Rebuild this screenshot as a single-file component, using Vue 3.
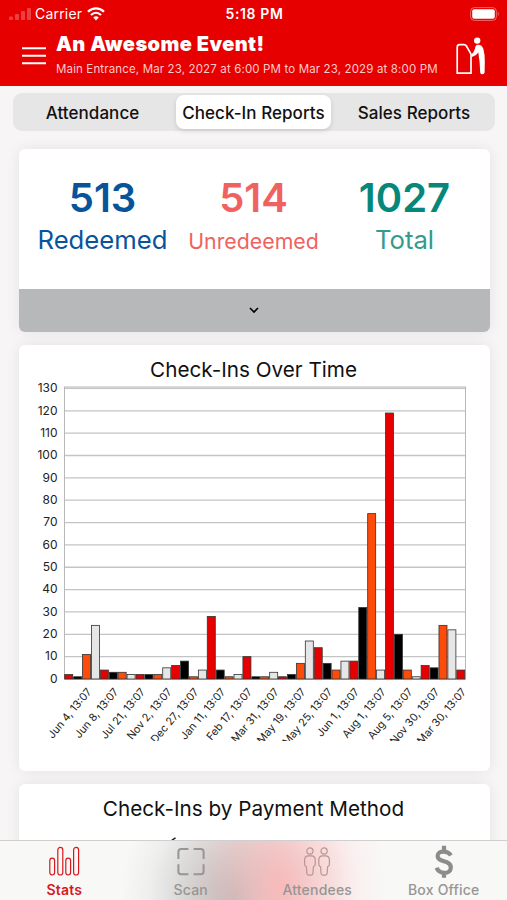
<script setup>
import { ref } from 'vue';

const segments = ['Attendance', 'Check-In Reports', 'Sales Reports'];
const activeSegment = ref(1);
const activeTab = ref('Stats');

const totals = [
    { value: 513, label: 'Redeemed', name: 'redeemed' },
    { value: 514, label: 'Unredeemed', name: 'unredeemed' },
    { value: 1027, label: 'Total', name: 'total' },
];

const tabs = ['Stats', 'Scan', 'Attendees', 'Box Office'];

// Check-ins chart
const values = [
    2, 1, 11, 24, 4, 3, 3, 2, 2, 2, 2, 5, 6, 8, 1,
    4, 28, 4, 1, 2, 10, 1, 1, 3, 1, 2, 7, 17, 14, 7,
    4, 8, 8, 32, 74, 4, 119, 20, 4, 1, 6, 5, 24, 22, 4,
];
const dates = [
    'Jun 4', 'Jun 8', 'Jul 21', 'Nov 2', 'Dec 27', 'Jan 11', 'Feb 17', 'Mar 31',
    'May 19', 'May 25', 'Jun 1', 'Aug 1', 'Aug 5', 'Nov 30', 'Mar 30',
];
const colors = ['#e60000', '#000000', '#ff4b0a', '#e6e6e6'];

const left = 45.5;
const right = 446.5;
const base = 294;
const unit = 2.235;
const step = (right - left) / values.length;

const ticks = Array.from({ length: 14 }, (_, i) => ({ label: i * 10, y: base - i * 10 * unit }));
const bars = values.map((v, i) => ({
    x: left + i * step + 0.2,
    y: base - v * unit,
    height: v * unit,
    fill: colors[i % 4],
}));
const labels = dates.map((d, i) => ({ text: `${d}, 13:07`, x: left + i * step * 3 + 27.8, y: 307 }));
</script>

<template>
    <div class="screen">
        <header class="header">
            <div class="status-bar">
                <div class="status-left">
                    <svg class="signal" width="22" height="14" viewBox="0 0 22 14">
                        <rect x="0" y="9.5" width="4" height="3.5" rx="1" />
                        <rect x="6" y="7" width="4" height="6" rx="1" />
                        <rect x="12" y="4" width="4" height="9" rx="1" />
                        <rect x="18" y="1" width="4" height="12" rx="1" />
                    </svg>
                    <span class="carrier">Carrier</span>
                    <svg class="wifi" width="18" height="14" viewBox="0 0 18 14">
                        <path d="M1 4.8 C5.6 .3 12.4 .3 17 4.8" />
                        <path d="M4 8 C7 5.1 11 5.1 14 8" />
                        <path class="wifi-dot" d="M6.2 10.4 Q9 7.9 11.8 10.4 L9 13.4 Z" />
                    </svg>
                </div>
                <span class="clock">5:18 PM</span>
                <svg class="battery" width="30" height="14" viewBox="0 0 30 14">
                    <rect class="battery-case" x=".6" y=".6" width="25.8" height="12.8" rx="3.8" />
                    <rect class="battery-level" x="2.2" y="2.2" width="22.6" height="9.6" rx="2" />
                    <path class="battery-tip" d="M27.8 4.6 Q30 7 27.8 9.4 Z" />
                </svg>
            </div>
            <div class="event-bar">
                <svg class="menu" width="26" height="20" viewBox="0 0 26 20">
                    <path d="M1 2.2 H25 M1 9.7 H25 M1 17.2 H25" />
                </svg>
                <div class="event">
                    <h1>An Awesome Event!</h1>
                    <p>Main Entrance, Mar 23, 2027 at 6:00 PM to Mar 23, 2029 at 8:00 PM</p>
                </div>
                <svg class="gate" width="30" height="38" viewBox="0 0 30 38">
                    <path class="gate-box" d="M3.6 7.6 H8 Q9.6 7.6 10.4 9 L15 17.2 V36.2 H1.2 V10.2 Q1.2 7.6 3.6 7.6 Z" />
                    <circle cx="21.2" cy="3.6" r="3.2" />
                    <path d="M21.4 7.8 Q26 7.4 27.4 12 Q29 18 28.8 24 L28.6 35.5 Q28.4 37.3 26.4 37.3 Q24.4 37.3 24.2 35.4 L23.6 25 Q22.8 20.4 22.4 15.6 Q20.4 18.8 16 20 L15.4 17.4 Q18 15.4 19 11.4 Q19.6 8 21.4 7.8 Z" />
                </svg>
            </div>
        </header>

        <main class="content">
            <div class="segmented">
                <button v-for="(s, i) in segments" :key="s" :class="{ active: i === activeSegment }" @click="activeSegment = i">
                    {{ s }}
                </button>
            </div>

            <section class="card summary">
                <div class="totals">
                    <div v-for="t in totals" :key="t.name" class="total-item" :class="t.name">
                        <strong>{{ t.value }}</strong>
                        <span>{{ t.label }}</span>
                    </div>
                </div>
                <div class="expand">
                    <svg width="10" height="7" viewBox="0 0 10 7"><path d="M1 1 L5 5 L9 1" /></svg>
                </div>
            </section>

            <section class="card chart-card">
                <h2>Check-Ins Over Time</h2>
                <svg class="chart" width="471" height="362" viewBox="0 -6 471 362">
                    <line v-for="t in ticks" :key="t.label" class="grid" :x1="left" :x2="right" :y1="t.y" :y2="t.y" />
                    <rect class="frame" :x="left" y="2" :width="right - left" height="292" />
                    <rect v-for="(b, i) in bars" :key="i" class="bar" :x="b.x" :y="b.y" :width="step - 0.9" :height="b.height" :fill="b.fill" />
                    <text v-for="t in ticks" :key="t.label" class="tick" x="38.5" :y="t.y + 3.8">{{ t.label }}</text>
                    <text v-for="l in labels" :key="l.text" class="date" :x="l.x" :y="l.y" :transform="`rotate(-50 ${l.x} ${l.y})`">{{ l.text }}</text>
                </svg>
            </section>

            <section class="card payment-card">
                <h2>Check-Ins by Payment Method</h2>
                <svg class="pie-line" width="6" height="4" viewBox="0 0 6 4"><path d="M.5 3.5 L4.5 .8" /></svg>
            </section>
        </main>

        <nav class="tab-bar">
            <a v-for="tab in tabs" :key="tab" class="tab" :class="{ active: tab === activeTab }" @click="activeTab = tab">
                <svg v-if="tab === 'Stats'" width="32" height="34" viewBox="0 0 32 34">
                    <rect x="1.8" y="13.2" width="4.8" height="16.8" rx="2.4" />
                    <rect x="9.8" y="2.4" width="5" height="27.6" rx="2.5" />
                    <rect x="17.8" y="13.2" width="4.8" height="16.8" rx="2.4" />
                    <rect x="25.6" y="2.4" width="5" height="27.6" rx="2.5" />
                </svg>
                <svg v-else-if="tab === 'Scan'" class="scan" width="32" height="34" viewBox="0 0 32 34">
                    <path d="M3.4 14 V6.8 Q3.4 4 6.2 4 H13.4 M18.6 4 H25.8 Q28.6 4 28.6 6.8 V14 M28.6 19.2 V26.4 Q28.6 29.2 25.8 29.2 H18.6 M13.4 29.2 H6.2 Q3.4 29.2 3.4 26.4 V19.2" />
                </svg>
                <svg v-else-if="tab === 'Attendees'" class="people" width="32" height="34" viewBox="0 0 32 34">
                    <g v-for="x in [0, 14.2]" :key="x" :transform="`translate(${x} 0)`">
                        <circle cx="8.9" cy="6" r="3.1" />
                        <path d="M7.4 10.8 H10.4 Q14.2 11 14.2 14.8 V19.2 Q14.2 21.4 12.4 21.8 L12 28 Q11.8 30.2 10.2 30.2 H7.6 Q6 30.2 5.8 28 L5.4 21.8 Q3.6 21.4 3.6 19.2 V14.8 Q3.6 11 7.4 10.8 Z" />
                    </g>
                </svg>
                <svg v-else class="dollar" width="32" height="34" viewBox="0 0 32 34">
                    <path d="M16 0.8 V5.6 M16 28 V32.8 M22.8 10.4 C20.2 5.6 9.6 4.8 9.6 11 C9.6 18 22.8 14.6 22.8 22.4 C22.8 29.8 11 29.4 8.6 22.8" />
                </svg>
                <span>{{ tab }}</span>
            </a>
        </nav>
    </div>
</template>

<style>
body {
    margin: 0;
    overflow: hidden;
}
</style>

<style scoped>
.screen {
    width: 507px;
    height: 900px;
    display: flex;
    flex-direction: column;
    overflow: hidden;
    background: #f7f5f6;
    font-family: Inter, "Liberation Sans", sans-serif;
    color: #111;
}

.header {
    flex: none;
    height: 86px;
    background: #e60000;
    color: #fff;
}

.status-bar {
    height: 27px;
    display: grid;
    grid-template-columns: 1fr auto 1fr;
    align-items: center;
    padding: 0 7px 0 9px;
}

.status-left {
    display: flex;
    align-items: center;
}

.signal {
    fill: rgba(255, 255, 255, 0.25);
}

.carrier {
    margin-left: 4px;
    font-size: 14px;
    letter-spacing: 0.2px;
}

.wifi {
    margin-left: 5px;
    fill: none;
    stroke: #fff;
    stroke-width: 2.3;
}

.wifi-dot {
    fill: #fff;
    stroke: none;
}

.clock {
    font-size: 14px;
    font-weight: 600;
    letter-spacing: 0.6px;
}

.battery {
    justify-self: end;
}

.battery-case {
    fill: none;
    stroke: rgba(255, 255, 255, 0.4);
}

.battery-level {
    fill: #fff;
}

.battery-tip {
    fill: rgba(255, 255, 255, 0.4);
}

.event-bar {
    display: flex;
    padding-left: 21px;
    padding-right: 21px;
}

.menu {
    margin-top: 19px;
    fill: none;
    stroke: #fff;
    stroke-width: 2;
}

.event {
    flex: 1;
    margin-left: 9px;
    white-space: nowrap;
}

.event h1 {
    margin: 5px 0 0;
    font-size: 20px;
    line-height: 24px;
    font-weight: 900;
    letter-spacing: 0.42px;
}

.event p {
    margin: 6px 0 0;
    font-size: 11.5px;
    line-height: 14px;
    letter-spacing: 0.14px;
    color: #ffc9c9;
}

.gate {
    margin-top: 10px;
    fill: #fff;
}

.gate-box {
    fill: none;
    stroke: #fff;
    stroke-width: 1.7;
}

.content {
    flex: 1;
    min-height: 0;
    overflow: hidden;
}

.segmented {
    display: grid;
    grid-template-columns: 159px 161px 162px;
    height: 38px;
    margin: 7px 12px 18px 13px;
    border-radius: 9px;
    background: #e7e6e7;
}

.segmented button {
    margin: 2px;
    padding: 2px 0 0;
    border: 0;
    border-radius: 8px;
    background: none;
    font: 500 17px Inter, sans-serif;
    letter-spacing: 0.06px;
    color: #111;
    white-space: nowrap;
}

.segmented .active {
    margin-left: 4px;
    background: #fff;
    box-shadow: 0 2px 5px rgba(0, 0, 0, 0.13);
}

.card {
    margin: 0 17px 13px 19px;
    border-radius: 6px;
    background: #fff;
    box-shadow: 0 0 14px rgba(0, 0, 0, 0.08);
}

.summary {
    height: 183px;
    overflow: hidden;
}

.totals {
    display: grid;
    grid-template-columns: repeat(3, 151px);
    height: 140px;
    padding-left: 8px;
}

.total-item {
    display: flex;
    flex-direction: column;
    align-items: center;
    padding-top: 25px;
}

.total-item strong {
    font-size: 40px;
    line-height: 48px;
    font-weight: 600;
}

.total-item span {
    font-size: 25.7px;
    line-height: 36px;
}

.redeemed {
    color: #07549b;
}

.unredeemed {
    color: #f0625f;
}

.unredeemed span {
    font-size: 21.3px;
    line-height: 38px;
}

.total strong {
    color: #07877a;
}

.total span {
    color: #35998e;
}

.expand {
    height: 43px;
    display: flex;
    align-items: center;
    justify-content: center;
    background: #b6b8b9;
}

.expand svg {
    margin-right: 1px;
    fill: none;
    stroke: #000;
    stroke-width: 1.6;
}

.chart-card {
    height: 426px;
}

.card h2 {
    margin: 0;
    padding: 12px 2px 0 0;
    font-size: 20.7px;
    line-height: 25px;
    font-weight: 400;
    text-align: center;
}

.chart-card h2 {
    margin-bottom: -3px;
}

.chart {
    display: block;
}

.grid {
    stroke: #c4c4c4;
    stroke-width: 1.3;
}

.frame {
    fill: none;
    stroke: #b8b8b8;
}

.bar {
    stroke: #333;
    stroke-width: 0.8;
}

.tick {
    font-size: 12px;
    text-anchor: end;
    fill: #222;
}

.date {
    font-size: 10.8px;
    text-anchor: end;
    fill: #222;
}

.payment-card {
    height: 200px;
}

.pie-line {
    display: block;
    margin: 16px 0 0 152px;
    fill: none;
    stroke: #111;
    stroke-width: 1.4;
}

.tab-bar {
    flex: none;
    height: 59px;
    display: grid;
    grid-template-columns: repeat(4, 1fr);
    padding-left: 1px;
    border-top: 1px solid #d0cecf;
    background:
        radial-gradient(ellipse 105px 150px at 280px 45px, rgba(255, 182, 182, 0.85), rgba(255, 190, 190, 0.55) 35%, rgba(255, 200, 200, 0.15) 75%, rgba(255, 200, 200, 0)),
        radial-gradient(ellipse 115px 130px at 236px 55px, rgba(155, 162, 162, 0.8), rgba(170, 174, 172, 0.52) 38%, rgba(185, 186, 184, 0.15) 76%, rgba(190, 190, 190, 0)),
        #f8f8f7;
}

.tab {
    display: flex;
    flex-direction: column;
    align-items: center;
    padding-top: 4px;
    color: #979595;
    font-size: 14px;
    line-height: 17px;
    font-weight: 500;
    letter-spacing: 0.2px;
}

.tab svg {
    margin-bottom: 2px;
    fill: none;
    stroke: currentColor;
    stroke-width: 1.2;
}

.tab .scan {
    stroke-width: 2;
}

.tab .people {
    color: #bb9494;
}

.tab .dollar {
    color: #8c8c8c;
    stroke-width: 4.2;
}

.tab.active {
    color: #d7191f;
    font-weight: 600;
}
</style>
